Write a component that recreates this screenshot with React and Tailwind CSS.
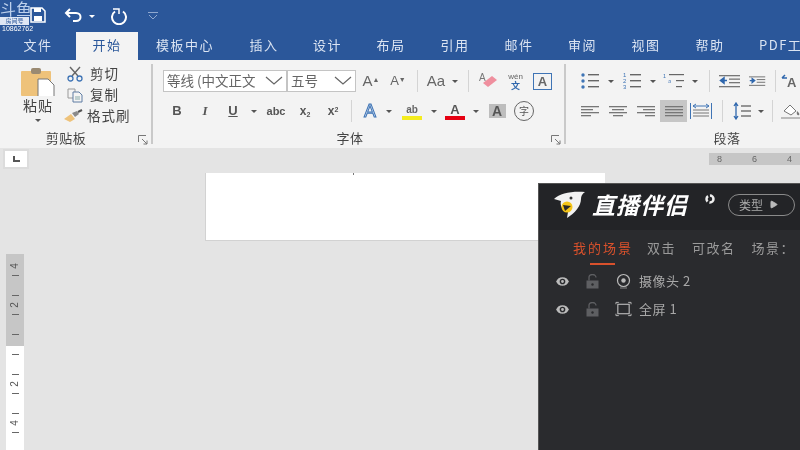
import React from 'react';
import { Eye, Play } from 'lucide-react';

const TABS = [
  ['文件', 'w-[76px]'], ['开始', 'w-[62px]'], ['模板中心', 'w-[94px]'], ['插入', 'w-[64px]'],
  ['设计', 'w-[63px]'], ['布局', 'w-[64px]'], ['引用', 'w-[64px]'], ['邮件', 'w-[64px]'],
  ['审阅', 'w-[63px]'], ['视图', 'w-[64px]'], ['帮助', 'w-[64px]'], ['PDF工', 'w-[58px] !justify-start pl-[17px]'],
];

const Caret = ({ className = '' }) => (
  <span className={`inline-block shrink-0 w-0 h-0 border-x-[3.5px] border-x-transparent border-t-[3.5px] border-t-[#555] ${className}`} />
);

const Sep = () => <div className="w-px h-[22px] bg-[#d4d4d4] shrink-0" />;

function Cell({ w = 'w-[28px]', children }) {
  return <div className={`${w} h-[22px] flex items-center justify-center shrink-0 text-[#555]`}>{children}</div>;
}

const Lines = ({ kind }) => {
  const rows = { left: [[0, 18], [0, 12], [0, 18], [0, 10]], center: [[0, 18], [3, 12], [0, 18], [4, 10]], right: [[0, 18], [6, 12], [0, 18], [8, 10]], full: [[0, 18], [0, 18], [0, 18], [0, 18]] }[kind];
  return (
    <svg width="18" height="12" viewBox="0 0 18 12">
      {rows.map(([x, w], i) => <rect key={i} x={x} y={i * 3 + 1} width={w} height="1.3" fill="#777" />)}
    </svg>
  );
};

const ListIcon = ({ num }) => (
  <svg width="18" height="18" viewBox="0 0 18 18">
    {[2, 8, 14].map((y, i) => (
      <g key={y}>
        {num ? <text x="0" y={y + 3} fontSize="6" fill="#3f74b5" fontFamily="Liberation Sans">{i + 1}</text> : <circle cx="2" cy={y + 1} r="1.7" fill="#3f74b5" />}
        <rect x="7" y={y} width="11" height="1.4" fill="#666" />
      </g>
    ))}
  </svg>
);

const Indent = ({ flip }) => (
  <svg width="22" height="14" viewBox="0 0 22 14">
    {[1, 4.5, 8, 12].map((y) => <rect key={y} x={y === 1 || y === 12 ? 0 : 10} y={y} width={y === 1 || y === 12 ? 21 : 11} height="1.3" fill="#777" />)}
    <path d={flip ? 'M1 6.5h5M4 3.8l3.5 2.7L4 9.2z' : 'M8 6.5H3M5 3.8L1.5 6.5 5 9.2z'} stroke="#2f67ad" fill="#2f67ad" strokeWidth="1.5" />
  </svg>
);

const GroupLabel = ({ className, children }) => (
  <span className={`absolute bottom-[-2px] text-center text-[13px] leading-[16px] tracking-[0.5px] text-[#444] ${className}`}>{children}</span>
);

const Launcher = ({ className }) => (
  <svg width="10" height="10" viewBox="0 0 10 10" fill="none" className={`absolute bottom-[-1px] ${className}`}>
    <path d="M.5 7V.5H8M4 4l5 5M9 5.5V9H5.5" stroke="#777" />
  </svg>
);

function Clipboard() {
  return (
    <div className="w-[153px] shrink-0 relative flex pl-[20px] pt-[4px] border-r-2 border-[#c9c9c9] my-[4px] h-[80px]">
      <div className="w-[36px] flex flex-col items-center">
        <svg width="36" height="28" viewBox="0 0 36 28">
          <rect x="1" y="3" width="30" height="25" rx="1" fill="#eec27a" />
          <rect x="11" y="0" width="10" height="6" rx="2" fill="#9a8a72" />
          <path d="M18 11h10l6 6v13H18z" fill="#fff" stroke="#777" strokeWidth="1" />
        </svg>
        <span className="text-[14px] leading-[18px] tracking-[1px] text-[#444]">粘贴</span>
        <Caret className="mt-[5px]" />
      </div>
      <div className="ml-[11px] -mt-[5px] flex flex-col text-[13.5px] leading-[21px] text-[#444]">
        <div className="flex items-center gap-[7px]">
          <svg width="16" height="16" viewBox="0 0 16 16" fill="none"><path d="M3 1l8 9M13 1L5 10" stroke="#666" strokeWidth="1.4" /><circle cx="3.5" cy="12.5" r="2.5" stroke="#3f74b5" strokeWidth="1.3" /><circle cx="12.5" cy="12.5" r="2.5" stroke="#3f74b5" strokeWidth="1.3" /></svg>
          <span className="tracking-[1px]">剪切</span>
        </div>
        <div className="flex items-center gap-[7px]">
          <svg width="16" height="16" viewBox="0 0 16 16" fill="none"><path d="M1 2h7v9H1z" stroke="#999" /><path d="M6 5h6l3 3v7H6z" fill="#f4f4f4" stroke="#5f7da3" /><path d="M8 10h5M8 12h5" stroke="#8aa" /></svg>
          <span className="tracking-[1px]">复制</span>
        </div>
        <div className="flex items-center gap-[4px] -ml-[3px]">
          <svg width="19" height="14" viewBox="0 0 19 14"><path d="M0 10l7-5 4 5-5 3z" fill="#eec27a" /><path d="M8 4l5-2 2 3-4 3z" fill="#8a8a8a" /><path d="M14 3l4-2" stroke="#555" strokeWidth="2" /></svg>
          <span className="tracking-[1px]">格式刷</span>
        </div>
      </div>
      <GroupLabel className="left-0 w-[132px]">剪贴板</GroupLabel>
      <Launcher className="right-[3px]" />
    </div>
  );
}

const Select = ({ w, text, clip }) => (
  <div className={`${w} h-[22px] bg-white border border-[#c4c4c4] flex items-center justify-between px-[3px] pb-[1px] text-[13.5px] text-[#666] overflow-hidden shrink-0`}>
    <span className={`whitespace-nowrap overflow-hidden ${clip}`}>{text}</span>
    <svg width="18" height="9" viewBox="0 0 18 9" fill="none" className="shrink-0"><path d="M1 1l8 7 8-7" stroke="#666" strokeWidth="1.2" /></svg>
  </div>
);

const FontRow1 = () => (
  <div className="flex items-center h-[22px]">
    <Select w="w-[124px]" text="等线 (中文正文" clip="w-[98px]" />
    <Select w="w-[69px]" text="五号" clip="w-[40px]" />
    <Cell w="w-[28px]"><span className="text-[15px] font-['Liberation_Sans'] ml-[2px] text-[#666]">A<sup className="text-[7px]">▲</sup></span></Cell>
    <Cell w="w-[28px]"><span className="text-[13px] font-['Liberation_Sans'] text-[#666]">A<sup className="text-[7px]">▼</sup></span></Cell>
    <div className="w-[5px]" />
    <Sep />
    <Cell w="w-[26px]"><span className="text-[15px] font-['Liberation_Sans'] text-[#666] ml-[10px]">Aa</span></Cell>
    <Cell w="w-[14px]"><Caret className="ml-[8px]" /></Cell>
    <div className="w-[10px]" />
    <Sep />
    <Cell w="w-[38px]">
      <svg width="20" height="18" viewBox="0 0 20 18"><text x="1" y="9" fontSize="10" fill="#777" fontFamily="Liberation Sans">A</text><path d="M5 11l9-7 5 4-9 7z" fill="#ef8f9e" /></svg>
    </Cell>
    <Cell w="w-[17px]">
      <span className="flex flex-col items-center leading-[9px]">
        <span className="text-[8px] font-['Liberation_Sans'] text-[#666]">wén</span>
        <span className="text-[9px] text-[#2f67ad] font-bold">文</span>
      </span>
    </Cell>
    <Cell w="w-[37px]"><span className="w-[19px] h-[17px] border border-[#3f74b5] text-[13px] leading-[15px] text-center font-['Liberation_Sans'] font-bold text-[#666]">A</span></Cell>
  </div>
);

const FontRow2 = () => (
  <div className="flex items-center h-[22px] font-['Liberation_Sans'] font-bold mt-[8px]">
    <Cell><span className="text-[13px]">B</span></Cell>
    <Cell><span className="text-[13px] italic font-['Liberation_Serif']">I</span></Cell>
    <Cell><span className="text-[13px] underline">U</span></Cell>
    <Cell w="w-[14px]"><Caret /></Cell>
    <Cell w="w-[30px]"><span className="text-[11px]">abc</span></Cell>
    <Cell><span className="text-[12px]">x<sub className="text-[7px]">2</sub></span></Cell>
    <Cell><span className="text-[12px]">x<sup className="text-[7px]">2</sup></span></Cell>
    <div className="w-[4px]" />
    <Sep />
    <Cell w="w-[36px]"><span className="text-[18px] font-normal text-[#dce8f6] [-webkit-text-stroke:1px_#3f74b5]">A</span></Cell>
    <Cell w="w-[2px]"><Caret /></Cell>
    <Cell w="w-[44px]">
      <span className="flex flex-col items-center leading-none">
        <span className="text-[10px] text-[#666] mt-[2px]">ab</span>
        <span className="w-[20px] h-[4px] bg-[#f4ec1e] mt-[1px]" />
      </span>
    </Cell>
    <Cell w="w-0"><Caret /></Cell>
    <Cell w="w-[42px]">
      <span className="flex flex-col items-center leading-none">
        <span className="text-[13px] text-[#555]">A</span>
        <span className="w-[20px] h-[4px] bg-[#e60012]" />
      </span>
    </Cell>
    <Cell w="w-0"><Caret /></Cell>
    <Cell w="w-[42px]"><span className="w-[17px] h-[14px] bg-[#bdbdbd] text-[14px] leading-[14px] text-center text-[#555]">A</span></Cell>
    <Cell w="w-[12px]"><span className="w-[20px] h-[20px] shrink-0 rounded-full border border-[#666] text-[10px] leading-[18px] text-center font-normal font-['Noto_Sans_CJK_SC']">字</span></Cell>
  </div>
);

function FontGroup() {
  return (
    <div className="w-[413px] shrink-0 relative my-[4px] h-[80px] pl-[10px] pt-[6px] border-r-2 border-[#c9c9c9]">
      <FontRow1 />
      <FontRow2 />
      <GroupLabel className="left-[174px] w-[46px]">字体</GroupLabel>
      <Launcher className="right-[3px]" />
    </div>
  );
}

function ParagraphGroup() {
  return (
    <div className="flex-1 relative my-[4px] h-[80px] pl-[10px] pt-[6px]">
      <div className="flex items-center h-[22px]">
        <Cell w="w-[28px]"><ListIcon /></Cell>
        <Cell w="w-[14px]"><Caret /></Cell>
        <Cell w="w-[28px]"><ListIcon num /></Cell>
        <Cell w="w-[14px]"><Caret /></Cell>
        <Cell w="w-[28px]">
          <svg width="22" height="16" viewBox="0 0 22 16"><text x="0" y="5" fontSize="5.5" fill="#3f74b5">1</text><text x="5" y="10" fontSize="5.5" fill="#3f74b5">a</text><rect x="6" y="1" width="15" height="1.2" fill="#666" /><rect x="13" y="7" width="8" height="1.2" fill="#666" /><rect x="13" y="13" width="6" height="1.2" fill="#666" /></svg>
        </Cell>
        <Cell w="w-[14px]"><Caret /></Cell>
        <div className="w-[7px]" />
        <Sep />
        <Cell w="w-[39px]"><Indent /></Cell>
        <Cell w="w-[17px]"><Indent flip /></Cell>
        <div className="w-[9px]" />
        <Sep />
        <Cell w="w-[30px]"><svg width="22" height="16" viewBox="0 0 22 16"><path d="M2 5l3-3M2 5h5" stroke="#2f67ad" strokeWidth="1.5" /><text x="7" y="14" fontSize="13" fontWeight="700" fill="#666" fontFamily="Liberation Sans">A</text></svg></Cell>
      </div>
      <div className="flex items-center h-[22px] mt-[8px]">
        <Cell w="w-[28px]"><Lines kind="left" /></Cell>
        <Cell w="w-[28px]"><Lines kind="center" /></Cell>
        <Cell w="w-[28px]"><Lines kind="right" /></Cell>
        <Cell w="w-[27px]"><span className="w-[27px] h-[22px] bg-[#c6c6c6] flex items-center justify-center"><Lines kind="full" /></span></Cell>
        <Cell w="w-[27px]">
          <svg width="22" height="16" viewBox="0 0 22 16"><path d="M.5 0v16M21.5 0v16" stroke="#3f74b5" /><path d="M3 3h16M6 1L3 3l3 2M16 1l3 2-3 2" stroke="#3f74b5" fill="none" /><path d="M3 7h16M3 10h16M3 13h16" stroke="#777" /></svg>
        </Cell>
        <div className="w-[8px]" />
        <Sep />
        <Cell w="w-[37px]">
          <svg width="20" height="18" viewBox="0 0 20 18"><path d="M4 1v16M2 4l2-3 2 3M2 14l2 3 2-3" stroke="#2f67ad" fill="none" strokeWidth="1.3" /><path d="M9 4h10M9 9h10M9 14h10" stroke="#777" strokeWidth="1.3" /></svg>
        </Cell>
        <Cell w="w-[2px]"><Caret /></Cell>
        <div className="w-[10px]" />
        <Sep />
        <Cell w="w-[38px]"><svg width="22" height="18" viewBox="0 0 22 18"><path d="M3 9l6-6 6 6-5 4z" fill="#fff" stroke="#777" /><path d="M16 9c2 2 3 3 2 4s-3 0-2-4z" fill="#777" /><rect x="0" y="15" width="22" height="2" fill="#bbb" /></svg></Cell>
      </div>
      <GroupLabel className="left-[138px] w-[46px]">段落</GroupLabel>
    </div>
  );
}

function VRuler() {
  const Tick = ({ short }) => <div className="h-[9.75px] flex items-center justify-center">{!short && <span className="w-[7px] h-px bg-[#666]" />}</div>;
  const Num = ({ n }) => <div className="h-[9.75px] flex items-center justify-center text-[10px] leading-none text-[#555] font-['Liberation_Sans']"><span className="-rotate-90">{n}</span></div>;
  return (
    <div className="w-[18px] ml-[6px] mt-[81px] flex flex-col shrink-0 h-[196px]">
      <div className="h-[92px] bg-[#c6c6c6] pt-[7px]">
        <Num n="4" /><Tick /><Tick short /><Tick /><Num n="2" /><Tick /><Tick short /><Tick />
      </div>
      <div className="flex-1 bg-white pt-[4px]">
        <Tick /><Tick short /><Tick /><Num n="2" /><Tick /><Tick short /><Tick /><Num n="4" /><Tick />
      </div>
    </div>
  );
}

const OpenLock = () => (
  <svg width="15" height="15" viewBox="0 0 15 15" fill="none" className="shrink-0">
    <rect x="1.5" y="6.5" width="12" height="8" fill="#5e5f62" />
    <path d="M4 6.5V3.5a3.5 3 0 0 1 7 0" stroke="#5e5f62" strokeWidth="1.3" />
    <circle cx="7.5" cy="10.5" r="1.2" fill="#2a2b2e" />
  </svg>
);

const SceneRow = ({ icon, label }) => (
  <div className="h-[28px] flex items-center pl-[15px]">
    <Eye size={17} fill="#bbb" stroke="#2a2b2e" strokeWidth={2} className="shrink-0" />
    <span className="ml-[14px]"><OpenLock /></span>
    <span className="ml-[15px] w-[17px] flex justify-center">{icon}</span>
    <span className="ml-[7px] tracking-[0.5px]">{label}</span>
  </div>
);

function LivePanel() {
  return (
    <div className="absolute left-[538px] top-[183px] right-0 bottom-0 bg-[#2a2b2e] border-l border-t border-[#555]">
      <div className="h-[46px] bg-[#232427] flex items-center pl-[13px] pb-[5px]">
        <svg width="36" height="30" viewBox="0 0 36 30" className="shrink-0">
          <path d="M2 9C8 3 20 1 33 2c-3 2-4 4-4 7 0 7-6 14-14 19l1-6C9 20 8 14 9 11z" fill="#f2f2f2" />
          <circle cx="15" cy="17" r="5.5" fill="#f5c518" />
          <path d="M11 15l8 1-6 5z" fill="#2a2a2a" />
          <circle cx="19" cy="8" r="1.5" fill="#333" />
        </svg>
        <span className="ml-[4px] text-white text-[23px] leading-none font-bold italic tracking-[1px] whitespace-nowrap">直播伴侣</span>
        <svg width="12" height="12" viewBox="0 0 12 12" className="shrink-0 mb-[12px] ml-[16px]"><circle cx="6" cy="6" r="3.5" fill="none" stroke="#eee" strokeWidth="2.5" strokeDasharray="6 2" /></svg>
        <div className="ml-[12px] w-[67px] h-[22px] rounded-full border border-[#8a8a8a] shrink-0 flex items-center pl-[10px] gap-[6px] text-[12px] text-[#aaa]">
          类型 <Play size={9} fill="#bbb" stroke="#bbb" />
        </div>
      </div>
      <div className="flex text-[13px] text-[#9a9a9a] pl-[34px] pt-[9px] leading-[18px] whitespace-nowrap tracking-[1.5px]">
        <span className="relative text-[#d9512c] w-[60px] tracking-[2px]">我的场景<span className="absolute left-[17px] top-[24px] w-[25px] h-[2px] bg-[#d9512c]" /></span>
        <span className="ml-[14px]">双击</span>
        <span className="ml-[16px]">可改名</span>
        <span className="ml-[16px]">场景：</span>
      </div>
      <div className="mt-[10px] flex flex-col text-[#a8a8a8] text-[13px]">
        <SceneRow label="摄像头 2" icon={
          <svg width="17" height="17" viewBox="0 0 17 17" fill="none"><circle cx="8.5" cy="7.5" r="6" stroke="#bbb" strokeWidth="1.2" /><circle cx="8.5" cy="7.5" r="2.2" fill="#bbb" /><path d="M5 15h7" stroke="#888" /></svg>
        } />
        <SceneRow label="全屏 1" icon={
          <svg width="18" height="16" viewBox="0 0 18 16" fill="none"><rect x="3" y="3" width="12" height="10" stroke="#bbb" strokeWidth="1.2" /><path d="M1 3V1h3M14 1h3v2M1 13v2h3M14 15h3v-2" stroke="#bbb" /></svg>
        } />
      </div>
    </div>
  );
}

export default function App() {
  return (
    <div className="relative w-[800px] h-[450px] overflow-hidden bg-[#e4e4e4] font-['Noto_Sans_CJK_SC','Liberation_Sans',sans-serif] blur-[0.5px]">
      {/* title bar */}
      <div className="h-[32px] bg-[#2b579a] flex items-center text-white pl-[30px]">
        <svg width="16" height="16" viewBox="0 0 16 16" fill="none" className="mb-[2px]"><path d="M1 1h11l3 3v11H1z" stroke="#fff" strokeWidth="1.5" /><rect x="4" y="1" width="7" height="4" fill="#fff" /><rect x="4" y="9" width="8" height="5" fill="#fff" /></svg>
        <svg width="20" height="18" viewBox="0 0 20 18" fill="none" className="ml-[18px]"><path d="M6 2L2 6l4 4" stroke="#fff" strokeWidth="2" /><path d="M2 6h10c6 0 6 8 0 8H9" stroke="#fff" strokeWidth="2" /></svg>
        <Caret className="ml-[5px] !border-t-white" />
        <svg width="18" height="18" viewBox="0 0 18 18" fill="none" className="ml-[15px]"><path d="M5 4.5a7 7 0 1 0 8 0" stroke="#fff" strokeWidth="2" /><path d="M3 2h6v5" stroke="#fff" strokeWidth="1.5" /></svg>
        <svg width="12" height="8" viewBox="0 0 12 8" fill="none" className="ml-[19px] mb-[1px]"><path d="M1 .5h10M2 3l4 4 4-4" stroke="#8fa8cf" strokeWidth="1" /></svg>
      </div>
      {/* douyu watermark */}
      <div className="absolute left-0 top-0 w-[34px] text-white leading-none">
        <div className="text-[16px] h-[17px] leading-[17px] text-[#bcd0ec] whitespace-nowrap">斗鱼</div>
        <div className="w-[29px] h-[8px] bg-[#dfe7f4] text-[#2b579a] text-[6px] leading-[8px] text-center overflow-hidden">房间号</div>
        <div className="text-[7px] pl-[2px] font-['Liberation_Sans'] leading-[8px]">10862762</div>
      </div>
      {/* tabs */}
      <div className="h-[28px] bg-[#2b579a] flex whitespace-nowrap">
        {TABS.map(([t, w], i) => (
          <div key={t} className={`${w} shrink-0 flex items-center justify-center pb-[3px] text-[13px] tracking-[1.5px] overflow-hidden ${i === 1 ? 'bg-[#f3f3f3] text-[#2b579a]' : 'text-[#dbe4f2]'}`}>{t}</div>
        ))}
      </div>
      {/* ribbon */}
      <div className="h-[88px] bg-[#f3f3f3] flex">
        <Clipboard />
        <FontGroup />
        <ParagraphGroup />
      </div>
      {/* ruler row */}
      <div className="h-[25px] bg-[#e4e4e4] flex items-start pt-[3px] pl-[5px]">
        <div className="w-[22px] h-[16px] bg-white flex items-center justify-center outline-2 outline-[#dcdcdc]">
          <span className="w-[7px] h-[6px] border-l-2 border-b-2 border-[#555]" />
        </div>
        <div className="ml-[682px] mt-[2px] flex-1 h-[12px] bg-[#c6c6c6] text-[9px] leading-[12px] text-[#666] font-['Liberation_Sans'] flex pl-[8px] gap-[30px]">
          <span>8</span><span>6</span><span>4</span>
        </div>
      </div>
      {/* workspace */}
      <div className="h-[277px] flex items-start">
        <VRuler />
        <div className="ml-[181px] w-[400px] h-[68px] bg-white border-l border-b border-[#d2d2d2] shrink-0 relative">
          <span className="absolute left-[147px] top-0 w-px h-[2px] bg-[#777]" />
        </div>
      </div>
      <LivePanel />
    </div>
  );
}
